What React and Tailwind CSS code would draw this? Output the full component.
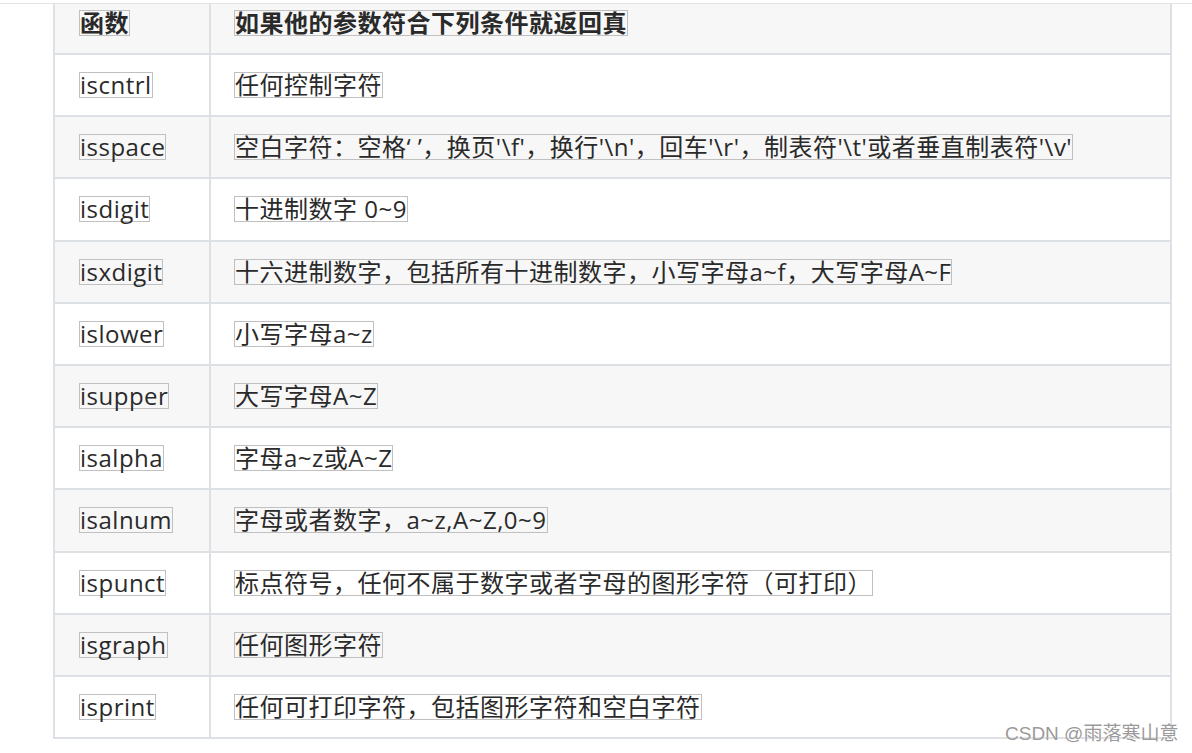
import React from "react";

const rows = [
  ["iscntrl", "任何控制字符"],
  ["isspace", "空白字符：空格‘ ’，换页'\\f'，换行'\\n'，回车'\\r'，制表符'\\t'或者垂直制表符'\\v'"],
  ["isdigit", "十进制数字 0~9"],
  ["isxdigit", "十六进制数字，包括所有十进制数字，小写字母a~f，大写字母A~F"],
  ["islower", "小写字母a~z"],
  ["isupper", "大写字母A~Z"],
  ["isalpha", "字母a~z或A~Z"],
  ["isalnum", "字母或者数字，a~z,A~Z,0~9"],
  ["ispunct", "标点符号，任何不属于数字或者字母的图形字符（可打印）"],
  ["isgraph", "任何图形字符"],
  ["isprint", "任何可打印字符，包括图形字符和空白字符"],
];

function Boxed({ children, bold }) {
  return (
    <span
      className={
        "inline-block border border-[#c0c0c0] leading-[24px] whitespace-nowrap " +
        (bold ? "font-bold" : "font-normal")
      }
    >
      {children}
    </span>
  );
}

export default function App() {
  return (
    <div
      className="relative w-[1192px] h-[753px] bg-white overflow-hidden text-[24px] tracking-[0.5px] text-[#2a2a2a]"
      style={{ fontFamily: '"Open Sans", "Noto Sans CJK SC", sans-serif' }}
    >
      <div className="h-[3px]" />
      <div className="h-[1px] bg-[#e2e2e2]" />
      <div className="ml-[53px] w-[1119px] border-x-2 border-[#dde0e4]">
        <div className="flex h-[51px] bg-[#f7f7f7] border-b-2 border-[#dde0e4]">
          <div className="w-[156px] shrink-0 border-r-2 border-[#dde0e4] pl-[24px] pt-[6px] flex items-start">
            <Boxed bold>函数</Boxed>
          </div>
          <div className="flex-1 pl-[23px] pt-[6px] flex items-start">
            <Boxed bold>如果他的参数符合下列条件就返回真</Boxed>
          </div>
        </div>
        {rows.map(([fn, desc], i) => (
          <div
            key={fn}
            className={
              "flex h-[62.2px] border-b-2 border-[#dde0e4] " +
              (i % 2 === 1 ? "bg-[#f7f7f7]" : "bg-white")
            }
          >
            <div className="w-[156px] shrink-0 border-r-2 border-[#dde0e4] pl-[24px] flex items-center">
              <Boxed>{fn}</Boxed>
            </div>
            <div className="flex-1 pl-[23px] flex items-center">
              <Boxed>{desc}</Boxed>
            </div>
          </div>
        ))}
      </div>
      <div
        className="absolute left-[1005px] top-[722px] text-[19px] leading-[24px] tracking-normal text-[#9a9a9a] whitespace-nowrap"
        style={{
          fontFamily: '"Liberation Sans", "Noto Sans CJK SC", sans-serif',
          textShadow: "0 0 1px #ffffff",
        }}
      >
        CSDN @雨落寒山意
      </div>
    </div>
  );
}
